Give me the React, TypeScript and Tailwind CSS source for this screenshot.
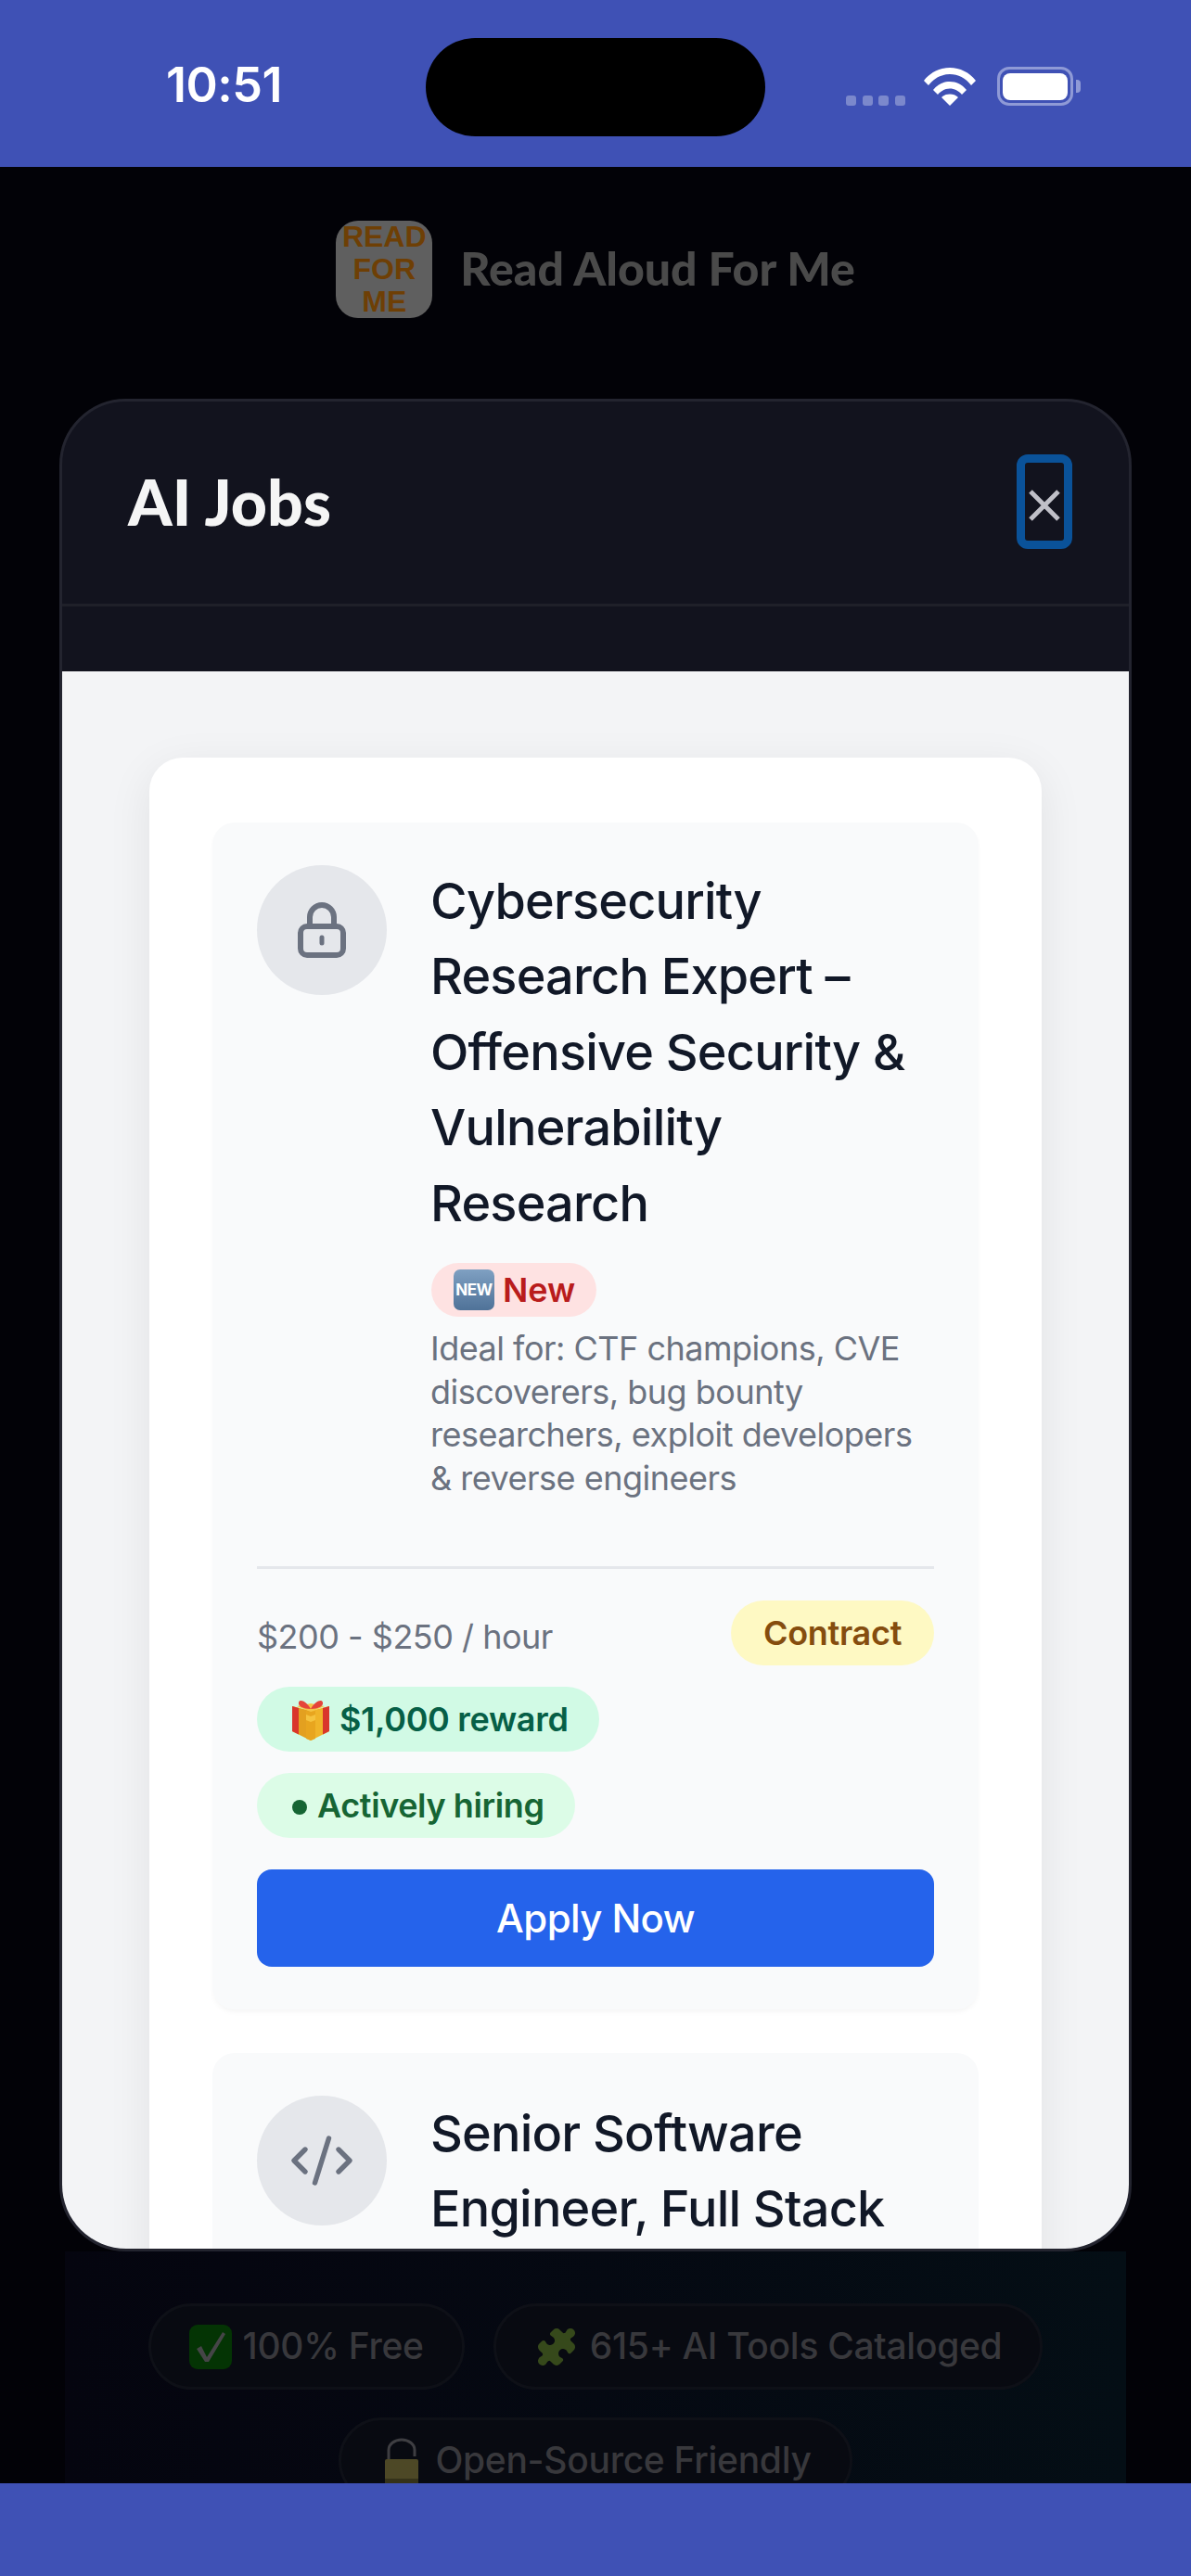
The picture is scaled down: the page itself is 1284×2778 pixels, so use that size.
import React from "react";

function LockIcon() {
  return (
    <svg width="54" height="60" viewBox="0 0 54 60" fill="none" stroke="#6b7280" strokeWidth="6" strokeLinecap="round" strokeLinejoin="round">
      <rect x="4" y="26" width="46" height="31" rx="7" />
      <path d="M14 26V16a13 13 0 0 1 26 0v10" />
      <path d="M27 38v6" strokeWidth="5" />
    </svg>
  );
}

function CodeIcon() {
  return (
    <svg width="72" height="72" viewBox="0 0 24 24" fill="none" stroke="#6b7280" strokeWidth="1.8" strokeLinecap="round" strokeLinejoin="round">
      <path d="m18 16 4-4-4-4" />
      <path d="m6 8-4 4 4 4" />
      <path d="m14.500 4-5 16" />
    </svg>
  );
}

function NewEmoji() {
  return (
    <span className="flex w-[44px] h-[44px] shrink-0 items-center justify-center rounded-[7px] bg-gradient-to-b from-[#7fa0c2] to-[#4f7298] text-[17px] leading-none font-bold tracking-[-0.5px] text-white">
      NEW
    </span>
  );
}

function GiftEmoji() {
  return (
    <svg width="44" height="46" viewBox="0 0 44 46" className="shrink-0">
      <path d="M22 14 2 9v27l20 10z" fill="#e3a020" />
      <path d="M22 14 42 9v27L22 46z" fill="#f0b429" />
      <path d="M2 9v27l7 3.500V11z" fill="#d9362b" />
      <path d="M42 9v27l-7 3.500V11z" fill="#d9362b" />
      <path d="M17 14v30l5 2 5-2V14l-5 1z" fill="#e8a51f" />
      <path d="M22 15 7 9l15-3 15 3z" fill="#f6c344" />
      <path d="M22 12C17 3 10 1 9 5s5 7 13 7zM22 12c5-9 12-11 13-7s-5 7-13 7z" fill="#e5443a" />
      <path d="M17 18l5 2 5-2v6l-5 2-5-2z" fill="#f5c33f" />
    </svg>
  );
}

function CheckEmoji() {
  return (
    <svg width="46" height="48" viewBox="0 0 46 48" className="shrink-0">
      <rect x="0" y="0" width="46" height="48" rx="9" fill="#043404" />
      <path d="M8 26l5-3 6 12L36 8l3 2-18 30h-4z" fill="#454547" />
    </svg>
  );
}

function PuzzleEmoji() {
  return (
    <svg width="48" height="48" viewBox="0 0 24 24" className="shrink-0">
      <path
        fill="#36491b"
        d="M19.439 7.85c-.049.322.059.648.289.878l1.568 1.568c.47.47.706 1.087.706 1.704s-.235 1.233-.706 1.704l-1.611 1.611a.98.98 0 0 1-.837.276c-.47-.07-.802-.48-.968-.925a2.501 2.501 0 1 0-3.214 3.214c.446.166.855.497.925.968a.979.979 0 0 1-.276.837l-1.61 1.61a2.404 2.404 0 0 1-1.705.707 2.402 2.402 0 0 1-1.704-.706l-1.568-1.568a1.026 1.026 0 0 0-.877-.29c-.493.074-.84.504-1.02.968a2.500 2.500 0 1 1-3.237-3.237c.464-.18.894-.527.967-1.02a1.026 1.026 0 0 0-.289-.877l-1.568-1.568A2.402 2.402 0 0 1 1.998 12c0-.617.236-1.234.706-1.704L4.230 8.770c.24-.24.581-.353.917-.303.515.077.877.528 1.073 1.010a2.500 2.500 0 1 0 3.259-3.259c-.482-.196-.933-.558-1.010-1.073-.05-.336.062-.676.303-.917l1.525-1.525A2.402 2.402 0 0 1 12 1.998c.617 0 1.234.236 1.704.706l1.568 1.568c.23.23.556.338.877.29.493-.074.84-.504 1.020-.968a2.500 2.500 0 1 1 3.237 3.237c-.464.18-.894.527-.967 1.020Z"
      />
    </svg>
  );
}

function OpenLockEmoji() {
  return (
    <svg width="36" height="50" viewBox="0 0 36 50" className="mx-[6px] shrink-0">
      <path d="M4 26V13a14 11 0 0 1 28 0v7" fill="none" stroke="#3e3e42" strokeWidth="3" />
      <rect x="0" y="23" width="36" height="26" rx="2" fill="#4d4826" />
      <rect x="0" y="44" width="36" height="5" fill="#35321a" />
    </svg>
  );
}

function BgPill({ icon, label }: { icon: React.ReactNode; label: string }) {
  return (
    <div className="flex h-[93px] items-center gap-[12px] rounded-[48px] border-[3px] border-[#0e1017] bg-[#080a11] px-[41px] text-[39px] font-medium tracking-[-0.3px] text-[#38383c]">
      {icon}
      <span>{label}</span>
    </div>
  );
}

function JobHead({ icon, title }: { icon: React.ReactNode; title: React.ReactNode }) {
  return (
    <div className="flex gap-[47px]">
      <div className="flex h-[140px] w-[140px] shrink-0 items-center justify-center rounded-full bg-[#e5e7eb]">{icon}</div>
      <div className="min-w-0 flex-1">
        <h3 className="text-[54px] leading-[81.400px] font-medium tracking-[-0.8px] text-[#111827]">{title}</h3>
      </div>
    </div>
  );
}

export default function App() {
  return (
    <div className="flex h-[2778px] w-[1284px] flex-col overflow-hidden [font-family:Inter,'Noto_Sans',sans-serif]">
      <header className="flex h-[180px] shrink-0 items-start bg-[#3f51b5]">
        <div className="ml-[179px] mt-[62px] w-[130px] text-[52px] leading-[60px] font-semibold tracking-[-0.5px] text-white">10:51</div>
        <div className="ml-[150px] mt-[41px] h-[106px] w-[366px] rounded-[53px] bg-black" />
        <div className="ml-[87px] mt-[72px] flex items-start">
          <div className="mt-[31px] flex gap-[6.5px]">
            <span className="h-[11px] w-[11px] rounded-[3px] bg-[#7b88cc]" />
            <span className="h-[11px] w-[11px] rounded-[3px] bg-[#7b88cc]" />
            <span className="h-[11px] w-[11px] rounded-[3px] bg-[#7b88cc]" />
            <span className="h-[11px] w-[11px] rounded-[3px] bg-[#7b88cc]" />
          </div>
          <svg width="58" height="42" viewBox="0 0 58 42" className="ml-[19px]" fill="#fff">
            <path d="M1 15C8 6 18 1 29 1s21 5 28 14l-5 5C46 12 38 8 29 8S12 12 6 20z" />
            <path d="M11 25c5-6 11-9 18-9s13 3 18 9l-5 5c-3.500-4-8-6.500-13-6.500S19.500 26 16 30z" />
            <path d="M20 33c2.500-2.500 5.500-3.500 9-3.500s6.500 1 9 3.500l-9 9z" />
          </svg>
          <div className="ml-[22px] flex items-center">
            <div className="flex h-[42px] w-[82px] items-center justify-center rounded-[13px] border-[3px] border-[#8f9ad6]">
              <div className="h-[29px] w-[70px] rounded-[8px] bg-white" />
            </div>
            <div className="ml-[3px] h-[14px] w-[5px] rounded-r-[4px] bg-[#8f9ad6]" />
          </div>
        </div>
      </header>

      <main className="relative flex min-h-0 flex-1 flex-col bg-[#020207]">
        <div className="flex h-[250px] shrink-0 items-start justify-center pt-[58px]">
          <div className="flex items-center gap-[30px]">
            <div className="flex h-[105px] w-[104px] flex-col items-center justify-center rounded-[24px] bg-[#5f5f5f] [font-family:'Liberation_Sans',sans-serif] text-[32px] leading-[35px] font-bold text-[#6e3f05]">
              <span>READ</span>
              <span>FOR</span>
              <span>ME</span>
            </div>
            <div className="-mt-[3px] [font-family:Lato,sans-serif] text-[50px] leading-[60px] font-black text-[#4a4a4a]">Read Aloud For Me</div>
          </div>
        </div>

        <div className="mx-[70px] mt-auto flex h-[250px] flex-col items-center overflow-hidden bg-gradient-to-r from-[#05050f] to-[#040e15] pt-[56px]">
          <div className="flex gap-[31px]">
            <BgPill icon={<CheckEmoji />} label="100% Free" />
            <BgPill icon={<PuzzleEmoji />} label="615+ AI Tools Cataloged" />
          </div>
          <div className="mt-[30px]">
            <BgPill icon={<OpenLockEmoji />} label="Open-Source Friendly" />
          </div>
        </div>

        <section className="absolute left-[64px] top-[250px] flex h-[1998px] w-[1156px] flex-col overflow-hidden rounded-[72px] border-[3px] border-[#23242f] bg-[#12131e]">
          <div className="flex h-[221px] shrink-0 items-start justify-between border-b-[3px] border-[#1f2029] pl-[71px] pr-[61px]">
            <h2 className="mt-[72px] [font-family:Lato,sans-serif] text-[68px] leading-[72px] font-black text-[#f5f5f5]">AI Jobs</h2>
            <button className="mt-[57px] flex h-[102px] w-[60px] items-center justify-center rounded-[12px] border-[9px] border-[#0a5299] pt-[8px]">
              <svg width="36" height="36" viewBox="0 0 36 36" stroke="#c0c0c8" strokeWidth="5">
                <path d="M3 3l30 30M33 3 3 33" />
              </svg>
            </button>
          </div>
          <div className="h-[70px] shrink-0" />
          <div className="min-h-0 flex-1 overflow-hidden bg-[#f3f4f6] px-[94px] pt-[93px]">
            <div className="flex flex-col gap-[47px] rounded-[36px] bg-white px-[68px] pt-[70px] pb-[48px] shadow-[0_12px_48px_rgba(0,0,0,0.08)]">
              <article className="rounded-[24px] bg-[#f9fafb] px-[48px] pt-[46px] pb-[46px] shadow-[0_4px_6px_-2px_rgba(0,0,0,0.05)]">
                <div className="flex gap-[47px]">
                  <div className="flex h-[140px] w-[140px] shrink-0 items-center justify-center rounded-full bg-[#e5e7eb]"><LockIcon /></div>
                  <div className="min-w-0 flex-1 -mt-[2px]">
                    <h3 className="text-[54px] leading-[81.400px] font-medium tracking-[-0.8px] text-[#111827]">Cybersecurity Research Expert – Offensive Security &amp; Vulnerability Research</h3>
                    <div className="mt-[24px] ml-[1px] flex h-[58px] w-[178px] items-center gap-[9px] rounded-[29px] bg-[#fee2e2] pl-[24px] text-[36px] font-semibold text-[#b91c1c]">
                      <NewEmoji />
                      <span>New</span>
                    </div>
                    <p className="mt-[11px] text-[36px] leading-[46.500px] tracking-[-0.5px] text-[#6b7280]">Ideal for: CTF champions, CVE discoverers, bug bounty researchers, exploit developers &amp; reverse engineers</p>
                  </div>
                </div>
                <div className="mt-[72px] h-[3px] bg-[#e5e7eb]" />
                <div className="mt-[34px] flex items-center justify-between">
                  <span className="mt-[8px] text-[36px] leading-[48px] tracking-[-0.5px] text-[#6b7280]">$200 - $250 / hour</span>
                  <span className="flex h-[70px] w-[219px] items-center justify-center rounded-[35px] bg-[#fef9c3] text-[36px] font-semibold tracking-[-0.3px] text-[#854d0e]">Contract</span>
                </div>
                <div className="mt-[23px] flex h-[70px] w-[369px] items-center gap-[9px] rounded-[35px] bg-[#d1fae5] pl-[36px] text-[36px] font-semibold tracking-[-0.3px] text-[#065f46]">
                  <GiftEmoji />
                  <span>$1,000 reward</span>
                </div>
                <div className="mt-[23px] flex h-[70px] w-[343px] items-center gap-[11px] rounded-[35px] bg-[#dcfce7] pl-[38px] text-[36px] font-semibold tracking-[-0.4px] text-[#166534]">
                  <span className="mt-[4px] h-[16px] w-[16px] rounded-full bg-[#166534]" />
                  <span>Actively hiring</span>
                </div>
                <button className="mt-[34px] flex h-[105px] w-full items-center justify-center rounded-[16px] bg-[#2563eb] text-[42px] font-medium tracking-[-0.6px] text-white">Apply Now</button>
              </article>
              <article className="rounded-[24px] bg-[#f9fafb] px-[48px] pt-[46px] pb-[46px]">
                <JobHead icon={<CodeIcon />} title="Senior Software Engineer, Full Stack" />
              </article>
            </div>
          </div>
        </section>
      </main>

      <footer className="h-[100px] shrink-0 bg-[#3f51b5]" />
    </div>
  );
}
